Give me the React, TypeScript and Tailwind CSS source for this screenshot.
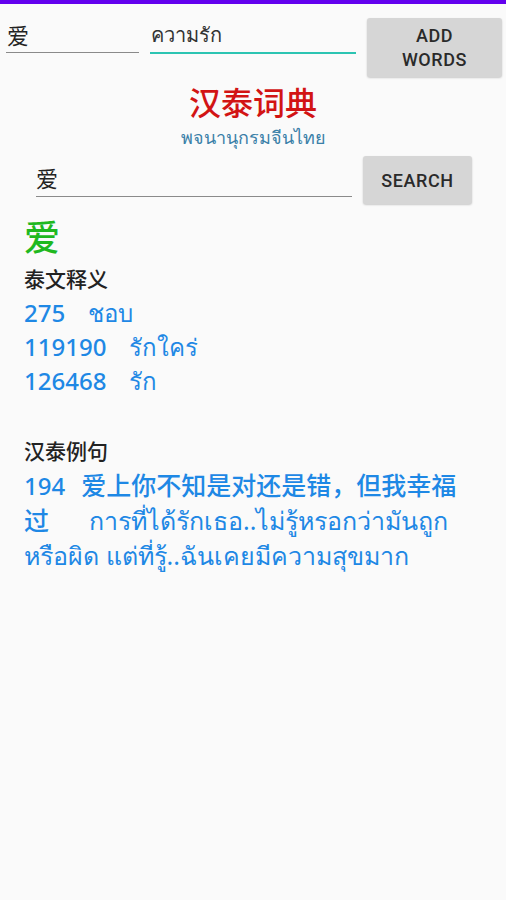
import React from "react";

const font = { fontFamily: '"Noto Sans", "Noto Sans CJK SC", sans-serif' };

export default function App() {
  return (
    <div className="w-[506px] h-[900px] bg-[#fafafa] overflow-hidden" style={font}>
      <div className="h-[4px] bg-[#6200ee]" />
      {/* Row 1 */}
      <div className="flex items-start pt-[10px]">
        <div className="ml-[6px] w-[133px] h-[35px] border-b border-[#8a8a8a] flex items-center pl-[1px] text-[22px] text-[#222] mt-[4px]">
          爱
        </div>
        <div className="ml-[11px] w-[206px] h-[36px] border-b-2 border-[#2cc4b2] flex items-center pl-[1px] text-[20px] text-[#333] mt-[4px]">
          ความรัก
        </div>
        <button className="ml-[11px] w-[135px] h-[59px] bg-[#d6d6d6] rounded-[3px] shadow-[0_1px_2px_rgba(0,0,0,0.2)] flex flex-col items-center justify-center text-[18px] leading-[24px] font-medium tracking-[0.6px] text-[#2a2a2a] mt-[4px]" style={{ fontFamily: '"Roboto", sans-serif' }}>
          <span>ADD</span>
          <span>WORDS</span>
        </button>
      </div>
      {/* Title */}
      <div className="flex flex-col items-center mt-[7px]">
        <div className="text-[32px] leading-[38px] text-[#d21414] font-medium">汉泰词典</div>
        <div className="text-[18px] leading-[24px] text-[#3a80a8] mt-[3px]">พจนานุกรมจีนไทย</div>
      </div>
      {/* Search row */}
      <div className="flex items-start mt-[7px]">
        <div className="ml-[36px] w-[316px] h-[37px] border-b border-[#8a8a8a] flex items-center text-[22px] text-[#222] mt-[4px]">
          爱
        </div>
        <button className="ml-[11px] w-[109px] h-[48px] bg-[#d6d6d6] rounded-[3px] shadow-[0_1px_2px_rgba(0,0,0,0.2)] flex items-center justify-center text-[18px] font-medium tracking-[0.6px] text-[#2a2a2a]" style={{ fontFamily: '"Roboto", sans-serif' }}>
          SEARCH
        </button>
      </div>
      {/* Result */}
      <div className="px-[24px] mt-[14px]">
        <div className="text-[36px] leading-[40px] text-[#1fb81f] font-medium">爱</div>
        <div className="text-[21px] leading-[30px] text-[#222] font-medium mt-[6px]">泰文释义</div>
        <div className="text-[24px] leading-[34px] text-[#1e88e5] font-medium mt-[2px]">
          <div className="flex"><span>275</span><span className="ml-[23px] font-normal">ชอบ</span></div>
          <div className="flex"><span>119190</span><span className="ml-[23px] font-normal">รักใคร่</span></div>
          <div className="flex"><span>126468</span><span className="ml-[23px] font-normal">รัก</span></div>
        </div>
        <div className="text-[21px] leading-[30px] text-[#222] font-medium mt-[38px]">汉泰例句</div>
        <div className="text-[24px] leading-[35px] text-[#1e88e5] font-medium mt-[2px] whitespace-nowrap">
          <span>194</span>
          <span className="ml-[16px] text-[25px]">爱上你不知是对还是错，但我幸福</span>
          <br />
          <span className="text-[25px]">过</span>
          <span className="ml-[40px] font-normal text-[25px]">การที่ได้รักเธอ..ไม่รู้หรอกว่ามันถูก</span>
          <br />
          <span className="font-normal text-[25px]">หรือผิด แต่ที่รู้..ฉันเคยมีความสุขมาก</span>
        </div>
      </div>
    </div>
  );
}
